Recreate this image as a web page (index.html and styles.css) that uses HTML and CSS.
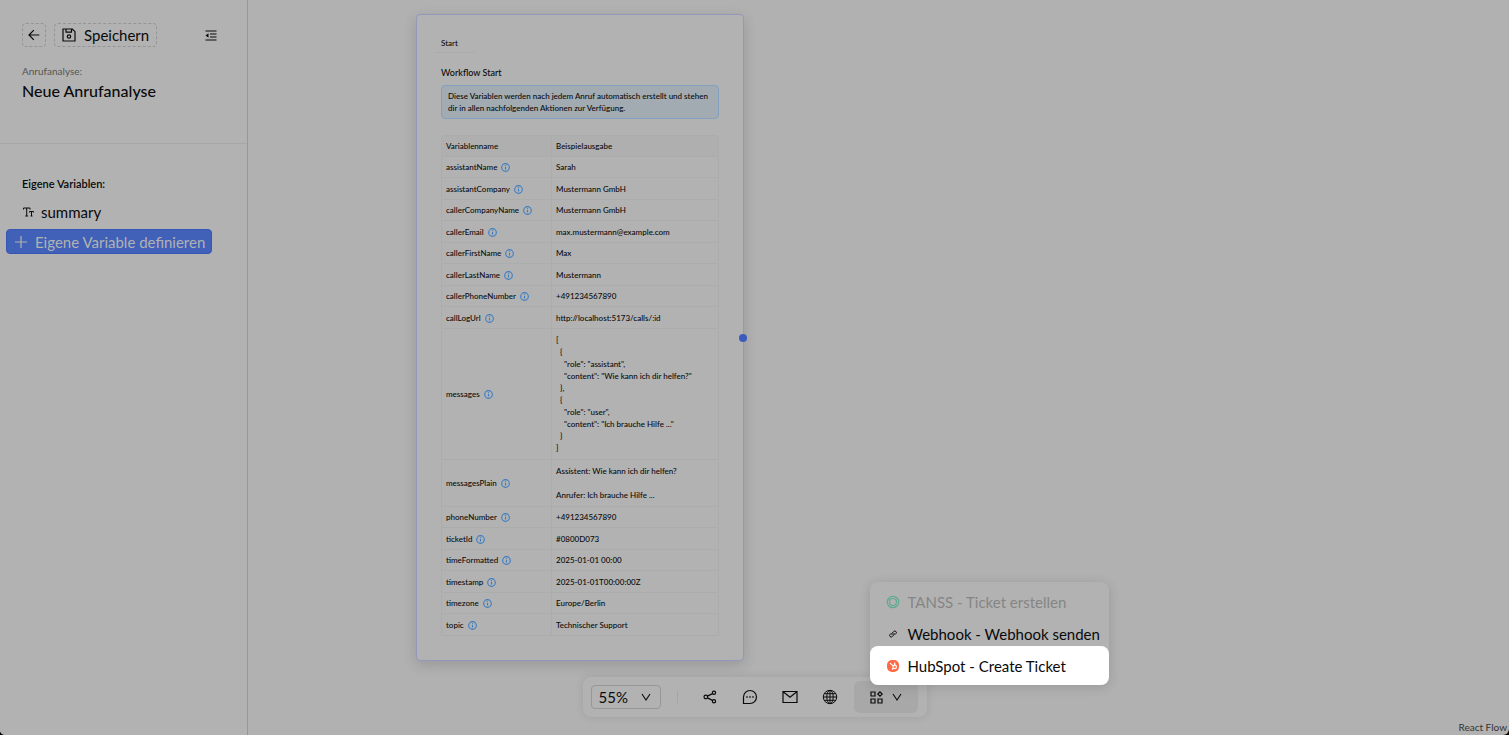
FILE: index.html
```html
<!doctype html>
<html lang="de">
<head>
	<meta charset="utf-8" />
	<meta name="viewport" content="width=device-width, initial-scale=1" />

	<title>Neue Anrufanalyse</title>

<link rel="stylesheet" href="styles.css">
</head>
<body>

<!-- shared icons -->
<svg class="defs" width="0" height="0">
	<symbol id="info" viewBox="0 0 16 16">
		<circle cx="8" cy="8" r="6.800" fill="none" stroke="currentColor" stroke-width="2"/>
		<path d="M8 7v4.500M8 4.200v1.600" fill="none" stroke="currentColor" stroke-width="2"/>
	</symbol>
	<symbol id="chevron" viewBox="0 0 10 10">
		<path d="M1 2l4 6 4-6" fill="none" stroke="currentColor" stroke-width="1.1"/>
	</symbol>
</svg>

<div class="app">
	<aside class="sidebar">
		<header class="head">
			<div class="actions">
				<button class="dashed" type="button" aria-label="Zurück">
					<svg width="12" height="12" viewBox="0 0 12 12"><path d="M11.3 6H1.2M5.8 1.2L1 6l4.8 4.8"/></svg>
				</button>
				<button class="dashed save" type="button">
					<svg width="14" height="14" viewBox="0 0 14 14"><path d="M1 1h9.300L13 3.700V13H1zM4 1v3.200h5.500V1"/><circle cx="7" cy="8.500" r="1.700"/></svg>
					Speichern
				</button>
				<button class="fold" type="button" aria-label="Menü einklappen">
					<svg width="12" height="11" viewBox="0 0 12 11"><path d="M.5 1h11M5 4h6.500M5 7h6.500M.5 10h11"/><path class="fill" d="M3.500 3.200v4.600L.5 5.500z"/></svg>
				</button>
			</div>
			<p class="kind">Anrufanalyse:</p>
			<h1>Neue Anrufanalyse</h1>
		</header>

		<section class="vars">
			<h2>Eigene Variablen:</h2>
			<div class="var">
				<svg width="11" height="10" viewBox="0 0 11 10"><path d="M.5 2.500V1h6.500v1.500M3.700 1v8M2.300 9h2.800M6.500 5.500V4.500h4v1M8.500 4.500V9M7.500 9h2"/></svg>
				summary
			</div>
			<button class="define" type="button">
				<svg width="12" height="12" viewBox="0 0 12 12"><path d="M6 0v12M0 6h12"/></svg>
				Eigene Variable definieren
			</button>
		</section>
	</aside>

	<main class="canvas">
		<article class="node">
			<div class="tab">Start</div>
			<h3>Workflow Start</h3>
			<p class="alert">Diese Variablen werden nach jedem Anruf automatisch erstellt und stehen dir in allen nachfolgenden Aktionen zur Verfügung.</p>

			<table>
				<thead>
					<tr><th>Variablenname</th><th>Beispielausgabe</th></tr>
				</thead>
				<tbody>
					<tr><td>assistantName <svg><use href="#info"/></svg></td><td>Sarah</td></tr>
					<tr><td>assistantCompany <svg><use href="#info"/></svg></td><td>Mustermann GmbH</td></tr>
					<tr><td>callerCompanyName <svg><use href="#info"/></svg></td><td>Mustermann GmbH</td></tr>
					<tr><td>callerEmail <svg><use href="#info"/></svg></td><td>max.mustermann@example.com</td></tr>
					<tr><td>callerFirstName <svg><use href="#info"/></svg></td><td>Max</td></tr>
					<tr><td>callerLastName <svg><use href="#info"/></svg></td><td>Mustermann</td></tr>
					<tr><td>callerPhoneNumber <svg><use href="#info"/></svg></td><td>+491234567890</td></tr>
					<tr><td>callLogUrl <svg><use href="#info"/></svg></td><td>http://localhost:5173/calls/:id</td></tr>
					<tr><td>messages <svg><use href="#info"/></svg></td><td><pre>[
  {
    "role": "assistant",
    "content": "Wie kann ich dir helfen?"
  },
  {
    "role": "user",
    "content": "Ich brauche Hilfe ..."
  }
]</pre></td></tr>
					<tr><td>messagesPlain <svg><use href="#info"/></svg></td><td><pre>Assistent: Wie kann ich dir helfen?

Anrufer: Ich brauche Hilfe ...</pre></td></tr>
					<tr><td>phoneNumber <svg><use href="#info"/></svg></td><td>+491234567890</td></tr>
					<tr><td>ticketId <svg><use href="#info"/></svg></td><td>#0800D073</td></tr>
					<tr><td>timeFormatted <svg><use href="#info"/></svg></td><td>2025-01-01 00:00</td></tr>
					<tr><td>timestamp <svg><use href="#info"/></svg></td><td>2025-01-01T00:00:00Z</td></tr>
					<tr><td>timezone <svg><use href="#info"/></svg></td><td>Europe/Berlin</td></tr>
					<tr><td>topic <svg><use href="#info"/></svg></td><td>Technischer Support</td></tr>
				</tbody>
			</table>
			<span class="handle"></span>
		</article>

		<a class="credit" href="#">React Flow</a>
	</main>

	<div class="toolbar">
		<button class="zoom" type="button">55% <svg width="10" height="10"><use href="#chevron"/></svg></button>
		<span class="sep"></span>
		<button class="tool" type="button" aria-label="Verzweigung">
			<svg width="14" height="14" viewBox="0 0 14 14"><circle cx="2.800" cy="7" r="1.800"/><circle cx="11" cy="2.800" r="1.600"/><circle cx="11" cy="11.200" r="1.600"/><path d="M4.400 6.100l5.100-2.500M4.400 7.900l5.100 2.500"/></svg>
		</button>
		<button class="tool" type="button" aria-label="Nachricht">
			<svg width="16" height="16" viewBox="0 0 16 16"><path d="M1.500 14.500V8A6.500 6.500 0 1 1 8 14.500z"/><path class="fill" d="M4.300 7.300h1.400v1.400H4.300zM7.300 7.300h1.400v1.400H7.300zM10.300 7.300h1.400v1.400h-1.400z"/></svg>
		</button>
		<button class="tool" type="button" aria-label="E-Mail">
			<svg width="16" height="14" viewBox="0 0 16 14"><path d="M1 1.500h14v11H1zM1.500 2L8 7.300 14.500 2"/></svg>
		</button>
		<button class="tool" type="button" aria-label="Web">
			<svg class="thin" width="16" height="16" viewBox="0 0 16 16"><circle cx="8" cy="8" r="6.700"/><ellipse cx="8" cy="8" rx="3.200" ry="6.700"/><path d="M8 1.300v13.400M1.300 8h13.400M2.300 4.700h11.400M2.300 11.300h11.400"/></svg>
		</button>
		<div class="apps">
			<button class="integrations" type="button" aria-label="Integrationen" aria-expanded="true">
				<svg width="13" height="13" viewBox="0 0 13 13"><path d="M1 1h4v4H1zM1 8h4v4H1zM8 8h4v4H8zM10 .8L12.200 3 10 5.200 7.800 3z"/></svg>
				<svg width="10" height="10"><use href="#chevron"/></svg>
			</button>
			<div class="menu">
				<button type="button" disabled>
					<svg class="tanss" width="14" height="14" viewBox="0 0 14 14"><circle cx="7" cy="7" r="5.700"/><circle cx="7" cy="7" r="3.500"/></svg>
					TANSS - Ticket erstellen
				</button>
				<button type="button">
					<svg class="thin" width="14" height="14" viewBox="0 0 14 14"><path d="M6.300 8.100a1.500 1.500 0 0 1 0-2.200l1.400-1.400a1.500 1.500 0 0 1 2.200 2.200L9 7.600M7.700 5.900a1.500 1.500 0 0 1 0 2.200L6.300 9.500a1.500 1.500 0 0 1-2.200-2.200L5 6.400"/></svg>
					Webhook - Webhook senden
				</button>
				<button class="active" type="button">
					<svg class="hubspot" width="14" height="14" viewBox="0 0 14 14"><rect class="tile" x="1" y="1" width="12" height="12" rx="5"/><circle cx="8.700" cy="7.900" r="1.700"/><path d="M8.700 6.200V3.500M7.300 6.900L4 4.200M7.400 9.200L6 10.500"/></svg>
					HubSpot - Create Ticket
				</button>
			</div>
		</div>
	</div>
</div>

</body>
</html>
```
FILE: styles.css
```css
* {
	box-sizing: border-box;
}

html {
	background: #000;
}

body {
	margin: 0;
	color: #0a0a0a;
	font: 15px/20px Lato, "Liberation Sans", sans-serif;
}

h1, h2, h3, p, pre {
	margin: 0;
	font-weight: 500;
}

button {
	display: flex;
	align-items: center;
	padding: 0;
	border: 0;
	background: none;
	color: inherit;
	font: inherit;
	white-space: nowrap;
}

svg {
	flex: none;
	fill: none;
	stroke: currentColor;
	stroke-width: 1.2;
}

svg .fill {
	fill: currentColor;
	stroke: none;
}

svg.thin {
	stroke-width: 1;
}

.defs {
	position: absolute;
}

.app {
	position: relative;
	display: flex;
	min-height: 100vh;
	overflow: hidden;
	border-radius: 0 0 6px 5px;
	background: #b1b1b1;
}

/* sidebar */

.sidebar {
	flex: none;
	width: 248px;
	border-right: 1px solid #979797;
	background: #b2b2b2;
}

.head {
	height: 144px;
	padding: 23px 22px 0;
	border-bottom: 1px solid #a7a7a7;
}

.actions {
	display: flex;
	align-items: center;
	gap: 8px;
}

.dashed {
	justify-content: center;
	gap: 8px;
	min-width: 24px;
	height: 24px;
	border: 1px dashed #959595;
	border-radius: 4px;
}

.save {
	padding: 0 7px;
}

.fold {
	margin-left: auto;
	margin-right: 8px;
}

.kind {
	margin-top: 16px;
	color: #555;
	font-size: 10px;
	line-height: 16px;
	font-weight: 400;
}

h1 {
	font-size: 16px;
	line-height: 24px;
}

.vars {
	padding: 32px 6px 0;
}

h2 {
	padding-left: 16px;
	font-size: 11px;
	line-height: 16px;
	font-weight: 600;
}

.var {
	display: flex;
	align-items: center;
	gap: 7px;
	height: 24px;
	margin: 8px 0 5px;
	padding-left: 17px;
}

.var svg {
	stroke-width: 1;
}

.define {
	gap: 8px;
	height: 25px;
	padding: 0 6px 0 8px;
	border: 1px solid #3457b4;
	border-radius: 4px;
	background: #4160b8;
	color: #b2b2b2;
}

/* canvas */

.canvas {
	position: relative;
	flex: 1;
}

.node {
	position: absolute;
	left: 168px;
	top: 14px;
	width: 328px;
	padding: 18px 24px 24px;
	border: 1px solid #9298ba;
	border-radius: 4px;
	background: #b2b2b2;
	box-shadow: 0 4px 14px rgba(0, 0, 0, .14);
	font-size: 8px;
	line-height: 12px;
}

.tab {
	width: 42px;
	height: 20px;
	margin-left: -7px;
	padding: 4px 7px;
	border-bottom: 1px solid #acacac;
	font-weight: 500;
}

h3 {
	margin: 13px 0 5px;
	font-size: 9px;
	line-height: 14px;
}

.alert {
	margin-bottom: 16px;
	padding: 4px 6px;
	border: 1px solid #83a1bf;
	border-radius: 4px;
	background: #a1abb1;
	font-weight: 500;
}

table {
	width: 100%;
	border: solid #abacac;
	border-width: 1px 0 0 1px;
	border-radius: 4px 4px 0 0;
	border-spacing: 0;
	table-layout: fixed;
}

th, td {
	height: 21px;
	padding: 4px;
	border: solid #abacac;
	border-width: 0 1px 1px 0;
	text-align: left;
	font-weight: 500;
}

th:first-child {
	width: 110px;
}

th {
	background: #afafaf;
}

tr:nth-child(even) td {
	height: 22px;
}

td svg {
	width: 9px;
	height: 9px;
	margin-left: 2px;
	color: #3c7dc4;
	vertical-align: -2px;
}

pre {
	font: inherit;
	padding: 1px 0;
}

.handle {
	position: absolute;
	top: 50%;
	right: -4px;
	width: 8px;
	height: 8px;
	margin-top: -4px;
	border-radius: 50%;
	background: #3a5bbd;
}

.credit {
	position: absolute;
	right: 2px;
	bottom: 0;
	color: #333;
	font-size: 10px;
	line-height: 16px;
	text-decoration: none;
}

/* toolbar floats over the canvas, centred in the window */

.toolbar {
	position: absolute;
	bottom: 18px;
	left: 50%;
	display: flex;
	align-items: center;
	height: 40px;
	padding: 0 9px 0 8px;
	border-radius: 8px;
	background: #b2b2b2;
	box-shadow: 0 0 8px rgba(0, 0, 0, .1);
	transform: translateX(-50%);
}

.zoom {
	justify-content: space-between;
	width: 70px;
	height: 24px;
	padding: 0 9px 0 7px;
	border: 1px solid #979797;
	border-radius: 4px;
}

.sep {
	width: 1px;
	height: 12px;
	margin: 0 12px 0 16px;
	background: #a5a5a5;
}

.tool {
	justify-content: center;
	width: 40px;
	height: 32px;
}

.apps {
	position: relative;
	margin-left: 4px;
}

.integrations {
	justify-content: center;
	gap: 9px;
	width: 64px;
	height: 32px;
	border-radius: 6px;
	background: #a8a8a8;
}

.menu {
	position: absolute;
	left: 16px;
	bottom: 28px;
	width: 239px;
	padding-top: 4px;
	border-radius: 8px;
	background: #b2b2b2;
	box-shadow: 0 2px 12px rgba(0, 0, 0, .14);
}

.menu button {
	gap: 8px;
	width: 100%;
	height: 32px;
	padding: 0 16px;
}

.menu button:disabled {
	color: #858585;
}

.menu .active {
	height: 39px;
	margin-top: -4px;
	border-radius: 8px;
	background: #fff;
}

.tanss {
	color: #5faa92;
}

.hubspot {
	color: #fff;
}

.hubspot .tile {
	fill: #ff6a45;
	stroke: none;
}
```
